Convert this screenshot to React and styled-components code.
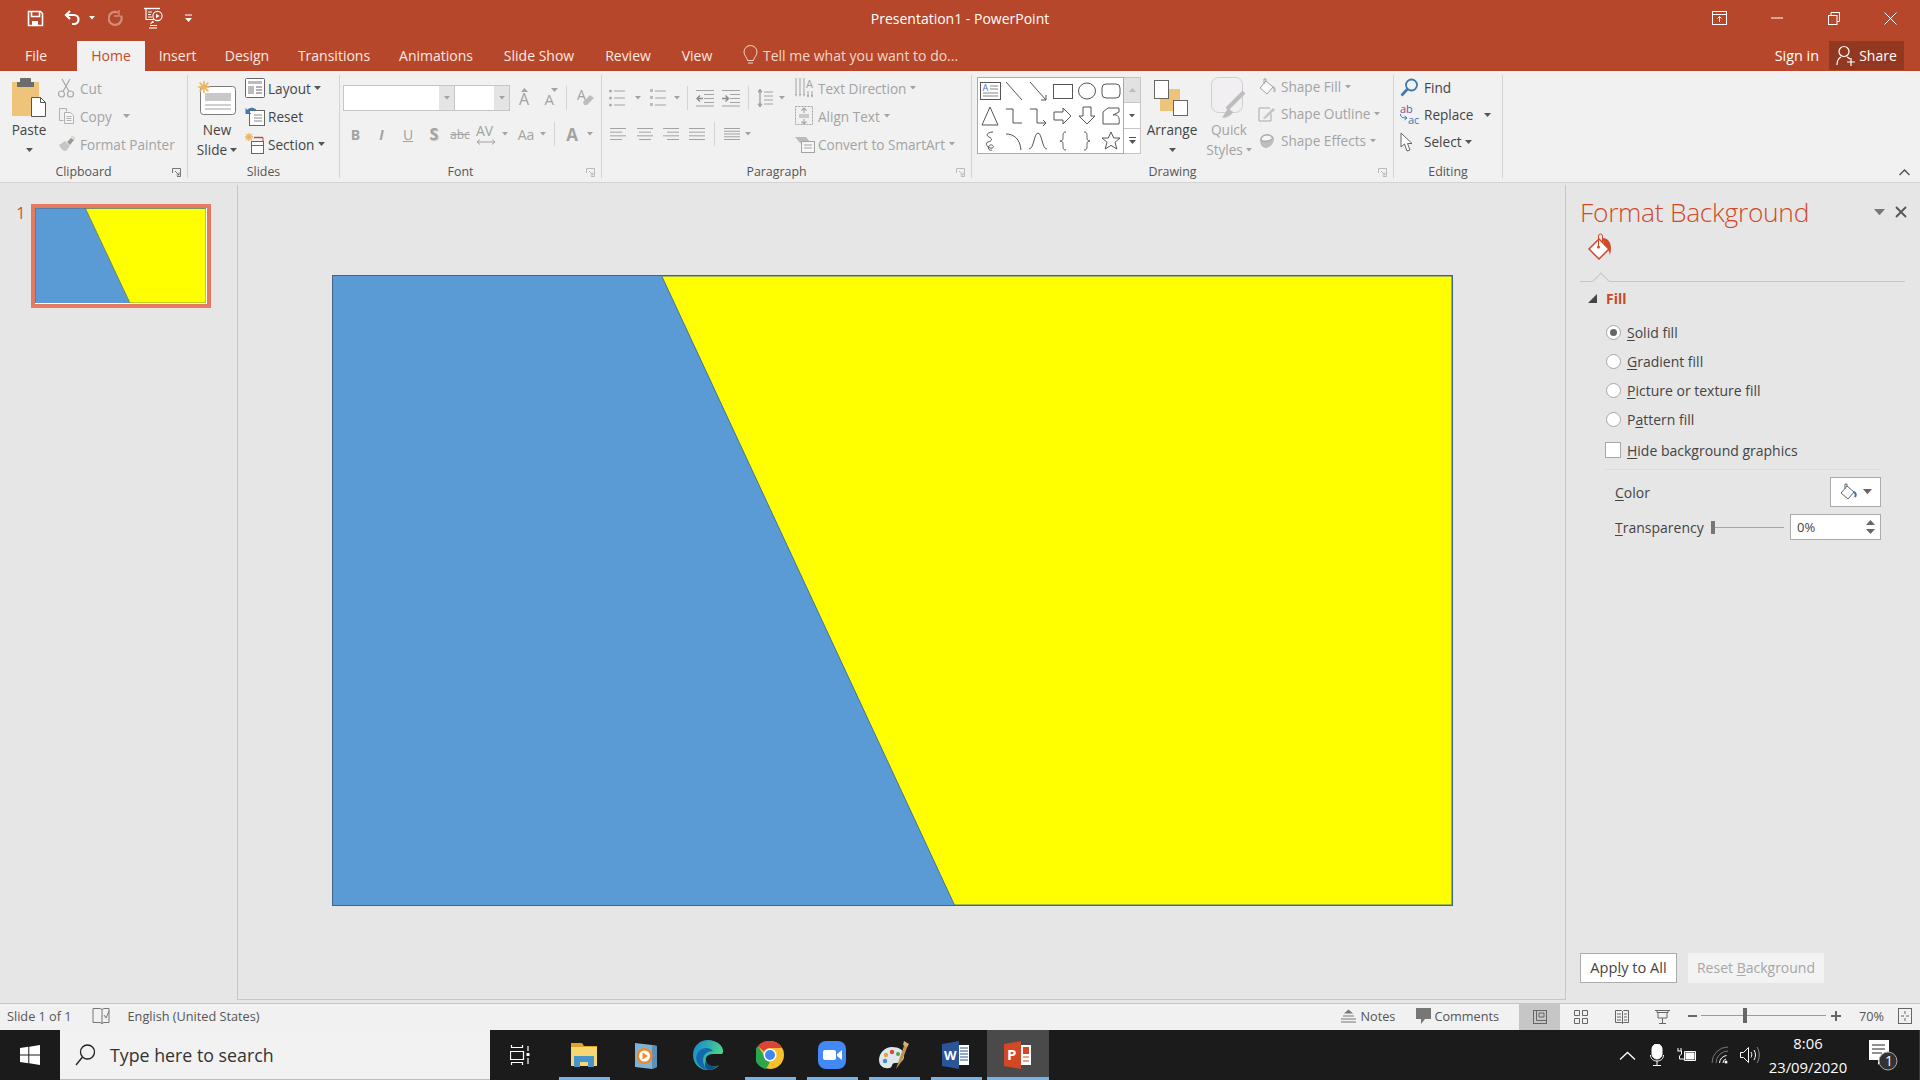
import React from 'react';
import styled, { createGlobalStyle } from 'styled-components';

const FONT = '"Open Sans", "Liberation Sans", sans-serif';
const RED = '#B7472A';
const OFF = '#a3a3a3';

const Global = createGlobalStyle`
  html, body { margin: 0; padding: 0; background: #e6e6e6; }
  body { font-family: ${FONT}; font-size: 14px; overflow: hidden; }
  * { box-sizing: border-box; }
  svg { display: block; flex: none; }
`;

const Page = styled.div`
  width: 1920px;
  height: 1080px;
  display: flex;
  flex-direction: column;
  overflow: hidden;
`;

/* title bar */
const TitleBar = styled.header`
  height: 36px;
  background: ${RED};
  color: #fff;
  display: flex;
  align-items: center;
`;
const Side = styled.div`
  flex: 1;
  display: flex;
  align-items: center;
  justify-content: ${(p) => (p.$right ? 'flex-end' : 'flex-start')};
  height: 100%;
`;
const Qat = styled.div`
  width: ${(p) => p.$w}px;
  display: flex;
  justify-content: center;
`;
const WinBtn = styled.div`
  width: 57px;
  display: flex;
  justify-content: center;
`;
const Title = styled.div`
  font-size: 14px;
`;

/* tabs */
const TabRow = styled.nav`
  height: 35px;
  background: ${RED};
  display: flex;
  align-items: flex-end;
  color: #fbe9e3;
  font-size: 14px;
`;
const Tab = styled.div`
  height: 30px;
  width: ${(p) => p.$w}px;
  padding-bottom: 2px;
  padding-right: ${(p) => p.$pr || 0}px;
  display: flex;
  align-items: center;
  justify-content: center;
  background: ${(p) => (p.$on ? '#f1f1f1' : 'transparent')};
  color: ${(p) => (p.$on ? '#c5492a' : 'inherit')};
`;
const TellMe = styled.div`
  height: 30px;
  padding-bottom: 2px;
  margin-left: 15px;
  display: flex;
  align-items: center;
  gap: 5px;
  color: #f3d6cc;
`;
const SignIn = styled.div`
  margin-left: auto;
  height: 30px;
  padding-bottom: 2px;
  display: flex;
  align-items: center;
  color: #fff;
  font-size: 14.4px;
`;
const Share = styled.div`
  width: 75px;
  height: 29px;
  margin: 0 16px 1px 10px;
  background: #923820;
  color: #fff;
  display: flex;
  align-items: center;
  justify-content: center;
  gap: 3px;
`;

/* ribbon */
const Ribbon = styled.section`
  height: 112px;
  background: #f1f1f1;
  border-bottom: 1px solid #d2d2d2;
  padding-top: 4px;
  display: flex;
  align-items: flex-start;
  position: relative;
  font-size: 13.6px;
  color: #444;
`;
const Group = styled.div`
  width: ${(p) => p.$w}px;
  height: 103px;
  border-right: 1px solid #d4d4d4;
  display: flex;
  flex-direction: column;
  position: relative;
`;
const GroupBody = styled.div`
  height: 90px;
  display: flex;
  align-items: flex-start;
  padding: ${(p) => p.$pad || '0'};
`;
const GroupLabel = styled.div`
  height: 13px;
  margin-top: 1px;
  line-height: 13px;
  text-align: center;
  font-size: 12.4px;
  color: #555;
  padding-right: ${(p) => (p.$launcher ? 20 : 0)}px;
`;
const Launcher = styled.svg`
  position: absolute;
  right: 6px;
  bottom: 1px;
`;
const Big = styled.div`
  width: ${(p) => p.$w || 50}px;
  margin-left: ${(p) => p.$ml || 0}px;
  margin-top: ${(p) => p.$mt || 0}px;
  flex: none;
  display: flex;
  flex-direction: column;
  align-items: center;
  color: ${(p) => (p.$off ? OFF : 'inherit')};
`;
const BigIcon = styled.div`
  height: 45px;
  display: flex;
  align-items: center;
  justify-content: center;
`;
const BigLine = styled.div`
  height: 20px;
  line-height: 20px;
  display: flex;
  align-items: center;
  justify-content: center;
  gap: 3px;
  white-space: nowrap;
`;
const Stack = styled.div`
  margin-left: ${(p) => p.$ml || 0}px;
  margin-top: ${(p) => (p.$mt === undefined ? -1 : p.$mt)}px;
  display: flex;
  flex-direction: column;
`;
const Small = styled.div`
  height: ${(p) => p.$h || 28}px;
  display: flex;
  align-items: center;
  white-space: nowrap;
  color: ${(p) => (p.$off ? OFF : 'inherit')};
`;
const SmallIcon = styled.div`
  width: ${(p) => p.$w || 22}px;
  display: flex;
  align-items: center;
`;
const Row = styled.div`
  display: flex;
  align-items: center;
  height: 26px;
  margin-top: ${(p) => p.$mt || 0}px;
`;
const Cell = styled.div`
  width: ${(p) => p.$w}px;
  margin-left: ${(p) => p.$ml || 0}px;
  flex: none;
  display: flex;
  justify-content: center;
  align-items: center;
  color: ${OFF};
  font-weight: ${(p) => (p.$b ? 700 : 400)};
  font-style: ${(p) => (p.$i ? 'italic' : 'normal')};
  text-decoration: ${(p) => (p.$u ? 'underline' : p.$s ? 'line-through' : 'none')};
  text-shadow: ${(p) => (p.$shadow ? '1px 1px 1px #c8c8c8' : 'none')};
  font-size: ${(p) => p.$fs || 14}px;
`;
const Glyph = styled.div`
  width: ${(p) => p.$w}px;
  height: ${(p) => p.$h}px;
  flex: none;
  position: relative;
`;
const GlyphText = styled.span`
  position: absolute;
  left: ${(p) => p.$x}px;
  top: ${(p) => p.$y}px;
  font-size: ${(p) => p.$fs}px;
  line-height: 1;
  color: ${(p) => p.$c || OFF};
`;
const GlyphArt = styled.svg`
  position: absolute;
  left: ${(p) => p.$x || 0}px;
  top: ${(p) => p.$y || 0}px;
`;
const VSep = styled.div`
  width: 1px;
  height: 24px;
  flex: none;
  background: #d4d4d4;
  margin-left: ${(p) => p.$ml || 0}px;
`;
const Combo = styled.div`
  width: ${(p) => p.$w}px;
  height: 26px;
  background: #fff;
  border: 1px solid #c6c6c6;
  border-left-width: ${(p) => (p.$joined ? 0 : 1)}px;
  display: flex;
  justify-content: flex-end;
`;
const ComboArrow = styled.div`
  width: 15px;
  background: #e4e4e4;
  display: flex;
  align-items: center;
  justify-content: center;
`;
const Gallery = styled.div`
  width: 147px;
  height: 77px;
  flex: none;
  background: #fff;
  border: 1px solid #ababab;
  display: grid;
  grid-template-columns: repeat(6, 1fr);
  grid-template-rows: repeat(3, 1fr);
  justify-items: center;
  align-items: center;
`;
const GalleryScroll = styled.div`
  width: 17px;
  height: 77px;
  flex: none;
  display: flex;
  flex-direction: column;
  border: 1px solid #c6c6c6;
  border-left: 0;
`;
const ScrollBtn = styled.div`
  flex: 1;
  display: flex;
  align-items: center;
  justify-content: center;
  background: ${(p) => (p.$off ? '#e2e2e2' : '#fff')};
  border-top: ${(p) => (p.$line ? '1px solid #c6c6c6' : '0')};
`;
const Collapse = styled.svg`
  position: absolute;
  right: 10px;
  bottom: 6px;
`;

/* main */
const Main = styled.main`
  flex: 1;
  display: flex;
  padding: 2px 0 3px;
  background: #e6e6e6;
  border-bottom: 1px solid #c6c6c6;
  min-height: 0;
`;
const ThumbPane = styled.aside`
  width: 238px;
  border-right: 1px solid #c6c6c6;
  display: flex;
  align-items: flex-start;
  padding: 19px 0 0 16px;
`;
const ThumbNo = styled.div`
  width: 15px;
  color: #d2563a;
  font-size: 17px;
  line-height: 18px;
`;
const ThumbFrame = styled.div`
  width: 180px;
  height: 104px;
  border: 4px solid #e47a62;
  background: #fff;
  padding: 0 1px 1px 0;
`;
const Editor = styled.div`
  flex: 1;
  border-bottom: 1px solid #c6c6c6;
  padding: 90px 0 0 94px;
`;
const SlideFrame = styled.div`
  width: 1121px;
  height: 631px;
  border: 1px solid #41658a;
`;

/* format pane */
const Pane = styled.aside`
  width: 355px;
  border-left: 1px solid #c6c6c6;
  padding: 10px 15px 17px 14px;
  display: flex;
  flex-direction: column;
`;
const PaneHead = styled.div`
  height: 34px;
  margin-right: -7px;
  display: flex;
  align-items: center;
`;
const PaneTitle = styled.h2`
  margin: 0;
  flex: 1;
  color: #d2492a;
  font-size: 26.4px;
  font-weight: 300;
  letter-spacing: -0.3px;
`;
const PaneCtl = styled.div`
  width: 22px;
  display: flex;
  justify-content: center;
`;
const PaneIcon = styled.div`
  height: 26px;
  margin: 4px 0 1px 7px;
`;
const PaneRule = styled.div`
  height: 1px;
  margin-top: 21px;
  background: #c6c6c6;
  position: relative;
  &::before {
    content: '';
    position: absolute;
    left: 15px;
    top: -6px;
    width: 11px;
    height: 11px;
    background: #e6e6e6;
    border: solid #c6c6c6;
    border-width: 1px 0 0 1px;
    transform: rotate(45deg);
  }
`;
const Section = styled.div`
  height: 18px;
  margin-top: 7px;
  display: flex;
  align-items: center;
  gap: 9px;
  padding-left: 8px;
  color: #c8482a;
  font-weight: 700;
  font-size: 14px;
`;
const Options = styled.div`
  margin: 11px 0 0 26px;
  color: #444;
  font-size: 14px;
`;
const OptionRow = styled.div`
  height: ${(p) => p.$h || 29}px;
  display: flex;
  align-items: center;
  gap: 6px;
  u { text-underline-offset: 2px; text-decoration-thickness: 1px; }
`;
const Radio = styled.span`
  width: 15px;
  height: 15px;
  border-radius: 50%;
  border: 1px solid #a6a6a6;
  background: #fff;
  display: flex;
  align-items: center;
  justify-content: center;
  &::after {
    content: '';
    width: 7px;
    height: 7px;
    border-radius: 50%;
    background: ${(p) => (p.$on ? '#666' : 'transparent')};
  }
`;
const Check = styled.span`
  width: 16px;
  height: 16px;
  margin: 0 0 0 -1px;
  border: 1px solid #a6a6a6;
  background: #fff;
`;
const ThinRule = styled.div`
  height: 1px;
  margin: 3px 25px 0 25px;
  background: #dcdcdc;
`;
const PropRow = styled.div`
  height: ${(p) => p.$h}px;
  width: 266px;
  margin: 7px 0 0 35px;
  display: flex;
  align-items: center;
  color: #444;
  font-size: 14px;
  u { text-underline-offset: 2px; text-decoration-thickness: 1px; }
`;
const ColorBtn = styled.div`
  width: 51px;
  height: 30px;
  margin-left: auto;
  background: #fff;
  border: 1px solid #ababab;
  display: flex;
  align-items: center;
  justify-content: center;
  gap: 6px;
`;
const SliderTrack = styled.div`
  width: 73px;
  height: 13px;
  margin-left: auto;
  display: flex;
  align-items: center;
  &::before {
    content: '';
    width: 4px;
    height: 13px;
    background: #777;
  }
  &::after {
    content: '';
    flex: 1;
    height: 1px;
    background: #a6a6a6;
  }
`;
const Spin = styled.div`
  width: 91px;
  height: 26px;
  margin-left: 6px;
  background: #fff;
  border: 1px solid #ababab;
  padding: 0 5px 0 6px;
  display: flex;
  align-items: center;
  justify-content: space-between;
  font-size: 13px;
`;
const PaneFoot = styled.div`
  margin-top: auto;
  display: flex;
  gap: 11px;
`;
const FootBtn = styled.div`
  width: ${(p) => p.$w}px;
  height: 30px;
  padding-bottom: 2px;
  display: flex;
  align-items: center;
  justify-content: center;
  font-size: ${(p) => p.$fs || 14}px;
  background: ${(p) => (p.$off ? '#f3f3f3' : '#fff')};
  border: 1px solid ${(p) => (p.$off ? '#f3f3f3' : '#ababab')};
  color: ${(p) => (p.$off ? '#a6a6a6' : '#444')};
  u { text-underline-offset: 2px; text-decoration-thickness: 1px; }
`;

/* status bar */
const Status = styled.footer`
  height: 26px;
  padding-bottom: 3px;
  background: #f1f1f1;
  display: flex;
  align-items: center;
  font-size: 12.7px;
  color: #555;
`;
const StatusText = styled.span`
  margin-left: ${(p) => p.$ml || 0}px;
`;
const StatusRight = styled.div`
  margin-left: auto;
  height: 100%;
  display: flex;
  align-items: center;
`;
const ViewBtn = styled.div`
  width: 41px;
  height: 26px;
  align-self: flex-start;
  display: flex;
  align-items: center;
  justify-content: center;
  background: ${(p) => (p.$on ? '#c6c6c6' : 'transparent')};
`;
const Zoom = styled.div`
  width: 125px;
  height: 13px;
  margin: 0 5px 0 4px;
  position: relative;
  display: flex;
  align-items: center;
  &::before {
    content: '';
    flex: 1;
    height: 1px;
    background: #9a9a9a;
  }
`;
const ZoomThumb = styled.span`
  position: absolute;
  left: 42px;
  top: -1px;
  width: 4px;
  height: 15px;
  background: #666;
`;

/* taskbar */
const Taskbar = styled.div`
  height: 50px;
  background: #1b1b1b;
  display: flex;
  align-items: stretch;
  color: #fff;
`;
const Start = styled.div`
  width: 60px;
  display: flex;
  align-items: center;
  justify-content: center;
`;
const Search = styled.div`
  width: 430px;
  background: #f2f2f2;
  border-bottom: 1px solid #bdbdbd;
  color: #333;
  display: flex;
  align-items: center;
  padding-left: 15px;
  gap: 15px;
  font-size: 17.8px;
`;
const Slot = styled.div`
  width: ${(p) => p.$w || 62}px;
  padding-right: ${(p) => p.$pr || 0}px;
  flex: none;
  display: flex;
  align-items: center;
  justify-content: center;
  position: relative;
  background: ${(p) => (p.$active ? '#4a4a4a' : 'transparent')};
  &::after {
    content: '';
    display: ${(p) => (p.$open ? 'block' : 'none')};
    position: absolute;
    left: ${(p) => (p.$active ? 0 : 6)}px;
    right: ${(p) => (p.$active ? 0 : 5)}px;
    bottom: 0;
    height: 3px;
    background: #76b4e8;
  }
`;
const Tray = styled.div`
  margin-left: auto;
  display: flex;
  align-items: center;
`;
const TrayItem = styled.div`
  width: ${(p) => p.$w || 30}px;
  display: flex;
  justify-content: center;
`;
const Clock = styled.div`
  width: 92px;
  text-align: center;
  font-size: 14.8px;
  line-height: 24px;
`;
const NotifyWrap = styled.div`
  width: 66px;
  padding-left: 15px;
  display: flex;
  border-right: 1px solid #3a3a3a;
  align-self: stretch;
  align-items: center;
`;

const Svg = ({ w = 16, h, vb, children, ...rest }) => (
  <svg width={w} height={h || w} viewBox={vb || `0 0 ${w} ${h || w}`} fill="none" {...rest}>
    {children}
  </svg>
);

const Arrow = ({ c = OFF, w = 7 }) => (
  <Svg w={w} h={(w * 4) / 7} vb="0 0 7 4">
    <path d="M0 0h7L3.500 4z" fill={c} />
  </Svg>
);

const LauncherIcon = ({ c = '#888' }) => (
  <Launcher width="9" height="9" viewBox="0 0 9 9" fill="none" stroke={c}>
    <path d="M.5 5V.5H8.500V8.500H5" />
    <path d="M3 3l4 4M7 4.500V7H4.500" />
  </Launcher>
);

const SlideArt = ({ w, h, edge, top }) => (
  <svg width={w} height={h} viewBox="0 0 1120 631" preserveAspectRatio="none">
    <rect width="1120" height="631" fill="#5B9BD5" />
    <polygon points="329,0 1120,0 1120,631 622,631" fill="#FFFF00" stroke={edge} strokeWidth={top ? 5 : 1} />
    {top && <path d="M0 2H1120M2 0V631" stroke="#4d6d8d" strokeWidth="5" />}
  </svg>
);

/* little line icons */
const Lines = ({ n = 3, w = 16, c = OFF, align = 'left', short = 0 }) => (
  <Svg w={w} h={16} stroke={c} strokeWidth="1">
    {Array.from({ length: n }).map((_, i) => {
      const len = i % 2 ? w - short : w;
      const x = align === 'center' ? (w - len) / 2 : align === 'right' ? w - len : 0;
      return <path key={i} d={`M${x} ${2.5 + (i * 11) / (n - 1)}h${len}`} />;
    })}
  </Svg>
);

const SaveIcon = () => (
  <Svg w={17} stroke="#fff" strokeWidth="1.6">
    <path d="M1.500 1.500h12l2 2v12h-14z" />
    <path d="M4.500 1.500v5h8v-5" />
    <rect x="5" y="11" width="6" height="4.500" fill="#fff" stroke="none" />
  </Svg>
);
const UndoIcon = () => (
  <Svg w={18} stroke="#fff" strokeWidth="2.2">
    <path d="M6 2L2 6l4 4" />
    <path d="M2 6h8a4.500 4.500 0 0 1 0 9H8" />
  </Svg>
);
const RedoIcon = () => (
  <Svg w={16} h={18} stroke="#d28e7a" strokeWidth="2.200">
    <path d="M10 3.500a6.500 6.500 0 1 0 3 3" />
    <path d="M11 1v6H6" strokeWidth="1.400" />
  </Svg>
);
const PresentIcon = () => (
  <Svg w={21} h={22} stroke="#fff" strokeWidth="1.1">
    <path d="M1 1.500h16" strokeWidth="1.4" />
    <path d="M3 1.500v11h9" />
    <path d="M5 5h4M5 7.500h3M5 10h4" />
    <circle cx="14.500" cy="9" r="4.600" />
    <path d="M13 6.800l3.600 2.200-3.600 2.200z" fill="#fff" stroke="none" />
    <path d="M10 14l-2.500 3M7 18.500h7M10 14v2" />
    <path d="M6 21h8" />
  </Svg>
);

const PasteIcon = () => (
  <Svg w={34} h={41} vb="0 0 34 41">
    <rect x="0" y="5" width="27" height="34" fill="#eec47b" />
    <rect x="8" y="1" width="11" height="8" rx="1" fill="#6d6d6d" />
    <rect x="5" y="5" width="17" height="5" fill="#6d6d6d" />
    <path d="M19.500 20.500h9l5 5v14h-14z" fill="#fff" stroke="#555" />
    <path d="M28.500 20.500v5h5" stroke="#555" />
  </Svg>
);
const CutIcon = () => (
  <Svg w={16} h={20} stroke="#a8a8a8" strokeWidth="1.2">
    <circle cx="3.500" cy="16" r="3" />
    <circle cx="12.500" cy="16" r="3" />
    <path d="M5 13.500L12 1M11 13.500L4 1" />
  </Svg>
);
const CopyIcon = () => (
  <Svg w={18} h={18} stroke="#b0b0b0">
    <path d="M1.500 1.500h7v3M1.500 1.500v12h4" />
    <path d="M6.500 5.500h6l3 3v8h-9z" fill="#f6f6f6" />
    <path d="M8.500 9.500h5M8.500 11.500h5M8.500 13.500h5" />
  </Svg>
);
const PainterIcon = () => (
  <Svg w={18} h={16}>
    <path d="M1 9l6-4 5 5-4 5C5 15 3 13 1 9z" fill="#c6c6c6" />
    <path d="M9 6l4-4 3 2-4 5z" fill="#9a9a9a" />
    <path d="M13 1h3v3" stroke="#e5c46f" />
  </Svg>
);
const NewSlideIcon = () => (
  <Svg w={40} h={36}>
    <rect x="3.500" y="6.500" width="35" height="28" rx="3" fill="#fff" stroke="#7a7a7a" />
    <rect x="8" y="13" width="26" height="8" fill="#c8c8c8" />
    <path d="M8 25h26M8 29h26" stroke="#a0a0a0" />
    <g stroke="#eeb55a" strokeWidth="1.6">
      <path d="M7 1v12M1 7h12M2.600 2.600l8.800 8.800M11.400 2.600l-8.800 8.800" />
    </g>
  </Svg>
);
const LayoutIcon = () => (
  <Svg w={20} h={20} stroke="#666">
    <rect x=".5" y=".5" width="19" height="19" rx="1" fill="#fff" />
    <rect x="3" y="3" width="14" height="3" fill="#bbb" stroke="none" />
    <rect x="3" y="8" width="6" height="8" fill="#bbb" stroke="none" />
    <path d="M11 9h6M11 12h6M11 15h6" />
  </Svg>
);
const ResetIcon = () => (
  <Svg w={20} h={20}>
    <rect x="4.500" y="4.500" width="15" height="15" fill="#fff" stroke="#666" />
    <path d="M9 9h8M9 12h8M9 15h8" stroke="#888" />
    <path d="M2 6.500a5 5 0 0 1 8.500-2" stroke="#3d7ab5" strokeWidth="2.200" />
    <path d="M.5 2v6h6z" fill="#3d7ab5" />
  </Svg>
);
const SectionIcon = () => (
  <Svg w={20} h={22}>
    <rect x="6.500" y="8.500" width="12" height="12" fill="#fff" stroke="#666" />
    <path d="M6.500 12.500h12" stroke="#666" />
    <path d="M9 4.500h9" stroke="#c5492a" strokeWidth="1.400" />
    <path d="M18 4.500v4" stroke="#c5492a" />
    <g stroke="#eeb55a" strokeWidth="1.300">
      <path d="M4 0v8M0 4h8M1 1l6 6M7 1L1 7" />
    </g>
  </Svg>
);
const GrowIcon = ({ up }) => (
  <Glyph $w={16} $h={20}>
    <GlyphText $x={2} $y={up ? 3 : 4} $fs={up ? 16 : 15}>A</GlyphText>
    <GlyphArt $x={up ? 4 : 8} width="7" height="4" viewBox="0 0 7 4">
      <path d={up ? 'M3.500 0L7 4H0z' : 'M0 0h7L3.500 4z'} fill={OFF} />
    </GlyphArt>
  </Glyph>
);
const ClearIcon = () => (
  <Glyph $w={18} $h={20}>
    <GlyphText $x={0} $y={0} $fs={14}>A</GlyphText>
    <GlyphArt $x={5} $y={6} width="13" height="12" viewBox="0 0 13 12">
      <path d="M1 8l7-7 4 3-7 7H2z" fill="#bdbdbd" />
    </GlyphArt>
  </Glyph>
);
const KernIcon = () => (
  <Glyph $w={22} $h={22}>
    <GlyphText $x={1} $y={1} $fs={14}>AV</GlyphText>
    <GlyphArt $x={1} $y={16} width="20" height="6" viewBox="0 0 20 6" fill="none" stroke={OFF}>
      <path d="M1 3h18M4 .5L1 3l3 2.500M16 .5L19 3l-3 2.500" />
    </GlyphArt>
  </Glyph>
);
const Bullets = ({ num }) => (
  <Svg w={16} h={20}>
    {[3, 10, 17].map((y) => (
      <g key={y}>
        {num ? <path d={`M0 ${y - 2}h3v3H0z`} fill="#bbb" /> : <circle cx="1.500" cy={y} r="1.500" fill="#aaa" />}
        <path d={`M5 ${y}h11`} stroke={OFF} />
      </g>
    ))}
  </Svg>
);
const Indent = ({ inc }) => (
  <Svg w={18} h={18} stroke={OFF}>
    <path d="M0 1.500h18M8 5.500h10M8 9.500h10M8 13.500h10M0 17h18" />
    <path d={inc ? 'M0 9.500h6M3.500 6.500l3 3-3 3' : 'M1 9.500h6M4 6.500l-3 3 3 3'} stroke="#8a8a8a" strokeWidth="1.400" />
  </Svg>
);
const SpacingIcon = () => (
  <Svg w={16} h={20} stroke={OFF}>
    <path d="M3 1v18" strokeWidth="1.400" />
    <path d="M1 4l2-3 2 3zM1 16l2 3 2-3z" fill={OFF} />
    <path d="M7 4h9M7 8h9M7 12h9M7 16h9" />
  </Svg>
);
const TextDirIcon = () => (
  <Glyph $w={18} $h={22}>
    <GlyphArt width="18" height="22" viewBox="0 0 18 22" fill="none">
      <path d="M1 1v16M5 1v16M9 1v16M13 20v-6M17 20v-6" stroke={OFF} />
      <path d="M1 20l-1-3h2zM5 20l-1-3h2zM9 20l-1-3h2zM13 21l-1-3h2zM17 21l-1-3h2z" fill={OFF} />
    </GlyphArt>
    <GlyphText $x={11} $y={1} $fs={11}>A</GlyphText>
  </Glyph>
);
const AlignTextIcon = () => (
  <Svg w={18} h={20} stroke={OFF}>
    <path d="M.5.5h17v18H.5z" strokeDasharray="2 1" />
    <path d="M9 2v5M9 18v-5M6.500 4.500L9 2l2.500 2.500M6.500 15.500L9 18l2.500-2.500" strokeWidth="1.100" />
    <path d="M4 9h10M4 11h10" />
  </Svg>
);
const SmartArtIcon = () => (
  <Svg w={20} h={18}>
    <path d="M0 2h11l5 6H5z" fill="#bbb" />
    <rect x="6.500" y="6.500" width="13" height="11" fill="#f6f6f6" stroke={OFF} />
    <path d="M9 10h8M9 13h8" stroke={OFF} />
  </Svg>
);
const ArrangeIcon = () => (
  <Svg w={36} h={36}>
    <rect x="14" y="9" width="12" height="21" fill="#eec47b" />
    <rect x="6" y="17" width="15" height="14" fill="#eec47b" />
    <rect x=".5" y=".5" width="14" height="18" fill="#fff" stroke="#666" />
    <rect x="19.500" y="20.500" width="14" height="15" fill="#fff" stroke="#666" />
  </Svg>
);
const QuickIcon = () => (
  <Svg w={36} h={42}>
    <rect x=".5" y=".5" width="31" height="35" rx="7" fill="#f1eff1" stroke="#cfcfcf" />
    <path d="M33 15L16 32" stroke="#bdbdbd" strokeWidth="4" />
    <path d="M17 31l-6 10c4 0 10-3 11-6z" fill="#bdbdbd" />
  </Svg>
);
const ShapeFillIcon = ({ c = '#a0a0a0', accent = '#b9b9b9' }) => (
  <Svg w={18} h={18} stroke={c}>
    <path d="M8 3l7 6-6 7-7-6z" fill="#fafafa" />
    <path d="M8 3V1h-2v5" />
    <path d="M15 9c2 1 2 3 1 5" stroke={accent} strokeWidth="2" />
  </Svg>
);
const ShapeOutlineIcon = () => (
  <Svg w={18} h={18} stroke="#a8a8a8">
    <path d="M1 3h11M1 3v13h12V9" />
    <path d="M5 13l10-10 2 2L7 14z" fill="#c4c4c4" stroke="none" />
  </Svg>
);
const ShapeFxIcon = () => (
  <Svg w={18} h={16}>
    <path d="M2 7c0-4 4-6 7-6s7 2 7 5c0 4-4 9-8 9-4 0-6-4-6-8z" fill="#bdbdbd" />
    <path d="M3 7c0-3 3-5 6-5s6 2 5 4c-2 2-9 3-11 1z" fill="#f4f4f4" stroke="#a0a0a0" />
  </Svg>
);
const FindIcon = () => (
  <Svg w={19} h={19} stroke="#3f78ad">
    <circle cx="11.500" cy="7" r="5.500" strokeWidth="1.800" />
    <path d="M7.500 11L1.500 17.500" strokeWidth="2.600" />
  </Svg>
);
const ReplaceIcon = () => (
  <Glyph $w={21} $h={21}>
    <GlyphText $x={0} $y={-1} $fs={11} $c="#7a4da0">ab</GlyphText>
    <GlyphText $x={8} $y={10} $fs={11} $c="#3f78ad">ac</GlyphText>
    <GlyphArt $y={10} width="8" height="8" viewBox="0 0 8 8" fill="none" stroke="#3f78ad">
      <path d="M.5 0c0 3 2 4 6 4M4.500 2l2.500 2-2.500 2" />
    </GlyphArt>
  </Glyph>
);
const SelectIcon = () => (
  <Svg w={13} h={20}>
    <path d="M1 1v14l3.500-3 2.500 7 3-1-2.500-6.500H12z" fill="#fff" stroke="#666" />
  </Svg>
);

const S = ({ children }) => (
  <Svg w={20} h={20} stroke="#555">
    {children}
  </Svg>
);
const SHAPES = [
  <Glyph key="tb" $w={21} $h={20}>
    <GlyphArt width="21" height="20" viewBox="0 0 21 20" fill="none" stroke="#555">
      <rect x=".5" y="1.500" width="20" height="17" fill="#fff" />
      <path d="M10 5h8M10 8h8M3 12h15M3 15h15" stroke="#888" />
    </GlyphArt>
    <GlyphText $x={3} $y={2} $fs={9} $c="#3f78ad">A</GlyphText>
  </Glyph>,
  <S key="l"><path d="M2 1l16 18" /></S>,
  <S key="al"><path d="M2 1l16 18M18 14v5h-5" /></S>,
  <S key="r"><rect x=".5" y="3.500" width="19" height="14" /></S>,
  <S key="e"><ellipse cx="10" cy="10" rx="8.500" ry="8" /></S>,
  <S key="rr"><rect x="1" y="3" width="18" height="14" rx="4" /></S>,
  <S key="t"><path d="M10 1l8 18H2z" /></S>,
  <S key="ec"><path d="M2 3h7v14h9" /></S>,
  <S key="ea"><path d="M2 3h7v14h9M15 14l3 3-3 3" /></S>,
  <S key="ra"><path d="M1 6h9V2l8 8-8 8v-4H1z" /></S>,
  <S key="da"><path d="M6 1h8v9h4l-8 8-8-8h4z" /></S>,
  <S key="f"><path d="M2 18V6l5-4h11v4l-6 3c5-1 7 2 6 9z" /></S>,
  <S key="sc"><path d="M13 1c-5 0-8 3-4 5s3 4-1 5 0 7 4 6-1-5-3-2 1 5 3 4" /></S>,
  <S key="ar"><path d="M2 3c8 0 14 5 15 16" /></S>,
  <S key="w"><path d="M1 18C6 18 6 2 10 2s4 16 9 16" /></S>,
  <S key="lb"><path d="M13 1c-3 0-3 2-3 4.500S10 10 7 10c3 0 3 2 3 4.500S10 19 13 19" /></S>,
  <S key="rb"><path d="M7 1c3 0 3 2 3 4.500S10 10 13 10c-3 0-3 2-3 4.500S10 19 7 19" /></S>,
  <S key="st"><path d="M10 1l2.700 6h6.300l-5 4.300 1.800 6.700-5.800-3.600L4.200 18 6 11.300 1 7h6.300z" /></S>,
];

const TipBucket = () => (
  <Svg w={27} h={27} vb="0 0 27 27">
    <path d="M12 6l10 10-10 10L2 16z" fill="#fff" stroke="#d2492a" strokeWidth="1.500" />
    <path d="M11.500 14V3a2 2 0 0 1 4 0v6" stroke="#d2492a" />
    <circle cx="11.500" cy="14" r="1.500" fill="#d2492a" />
    <path d="M15 5c7 0 11 6 8 17-1-4-2-7-5-9z" fill="#d2492a" />
  </Svg>
);

const WinLogo = () => (
  <Svg w={20} h={20} vb="0 0 20 20">
    <path d="M0 3l8.300-1.200v7.700H0zM9.300 1.700L20 0v9.500H9.300zM0 10.500h8.300v7.700L0 17zM9.300 10.500H20V20L9.300 18.300z" fill="#fff" />
  </Svg>
);
const SearchIcon = () => (
  <Svg w={20} h={22} stroke="#222" strokeWidth="1.300">
    <circle cx="12.500" cy="8" r="7" />
    <path d="M7.500 13L1 21" />
  </Svg>
);
const TaskView = () => (
  <Svg w={20} h={20} stroke="#fff" strokeWidth="1.200">
    <path d="M1.500 0v2.500h11V0M.5 6.500h13v8H.5zM1.500 20v-2.500h11V20M18 1v5M18 13v6" />
    <rect x="16.500" y="8" width="3" height="3" fill="#fff" stroke="none" />
  </Svg>
);
const Explorer = () => (
  <Svg w={28} h={26}>
    <path d="M1 1h11l2 3h13v20H1z" fill="#dca52a" />
    <rect x="1" y="5" width="26" height="19" fill="#f7d774" />
    <path d="M4 25V14h20v11h-6v-5h-8v5z" fill="#4a94cc" />
  </Svg>
);
const Media = () => (
  <Svg w={24} h={28}>
    <path d="M1 2l17 2 5 1v21l-5 2-17-2z" fill="#7fb2d4" />
    <path d="M18 4l5 1v21l-5 2z" fill="#5b91b8" />
    <circle cx="10.500" cy="15" r="8" fill="#ee8a2c" />
    <circle cx="10.500" cy="15" r="5.500" fill="#fff" />
    <path d="M8.500 11.500l5.500 3.500-5.500 3.500z" fill="#ee8a2c" />
  </Svg>
);
const Edge = () => (
  <Svg w={30} h={30}>
    <defs>
      <linearGradient id="edgeTop" x1="0" y1="0" x2="1" y2="0.500">
        <stop offset="0" stopColor="#1581d6" />
        <stop offset="1" stopColor="#4fdc7f" />
      </linearGradient>
    </defs>
    <path d="M15 0C7 0 0 6 0 15c0 8 6 15 14 15 5 0 9-1 12-5-5 3-12 1-13-4-1-4 2-7 7-7h9c1-1 1-2 1-3C30 5 23 0 15 0z" fill="url(#edgeTop)" />
    <path d="M10 20c0-6 5-9 10-9-2-3-7-4-11-2-5 2-7 8-5 13 2 5 7 8 11 8-3-2-5-6-5-10z" fill="#1269b0" />
    <path d="M13 21c1 5 8 7 13 4-3 3-7 5-11 5-3-2-4-6-2-9z" fill="#0d4f8a" />
  </Svg>
);
const Chrome = () => (
  <Svg w={28} h={28}>
    <circle cx="14" cy="14" r="14" fill="#fbc02d" />
    <path d="M14 0a14 14 0 0 1 12.100 7H14a7 7 0 0 0-6.100 3.500L1.800 5A14 14 0 0 1 14 0z" fill="#dd4437" />
    <path d="M1.800 5l6.100 9a7 7 0 0 0 6.100 7l-4 6.900A14 14 0 0 1 1.800 5z" fill="#2da44e" />
    <circle cx="14" cy="14" r="6.500" fill="#fff" />
    <circle cx="14" cy="14" r="5" fill="#4285f4" />
  </Svg>
);
const ZoomApp = () => (
  <Svg w={28} h={28}>
    <rect width="28" height="28" rx="8" fill="#4289f5" />
    <rect x="5" y="9" width="13" height="10" rx="2" fill="#fff" />
    <path d="M19 13l5-4v10l-5-4z" fill="#fff" />
  </Svg>
);
const Palette = () => (
  <Svg w={30} h={30}>
    <path d="M13 7C6 7 0 13 0 20c0 6 5 9 10 8 4 0 2-5 6-5s9-1 9-7-5-9-12-9z" fill="#dfe7ee" />
    <circle cx="7" cy="15" r="2.200" fill="#e5a23a" />
    <circle cx="13" cy="12" r="2.200" fill="#d9483b" />
    <circle cx="6" cy="21" r="2.200" fill="#3f8ec9" />
    <circle cx="19" cy="14" r="2" fill="#4aa64a" />
    <path d="M26 3l-6 17-3 9 6-8 6-16z" fill="#c09350" />
    <path d="M25 1l5 3-2 3-4-2z" fill="#d8b170" />
  </Svg>
);
const WordApp = () => (
  <Svg w={28} h={28}>
    <path d="M0 3l17-3v28L0 25z" fill="#2a5699" />
    <path d="M17 4h10v20H17z" fill="#fff" />
    <path d="M18 7h8M18 10h8M18 13h8M18 16h8M18 19h8" stroke="#2a5699" />
    <text x="2" y="19" fontSize="13" fontWeight="700" fill="#fff" fontFamily={FONT}>W</text>
  </Svg>
);
const PptApp = () => (
  <Svg w={28} h={28}>
    <path d="M0 3l17-3v28L0 25z" fill="#d24726" />
    <path d="M17 4h10v20H17z" fill="#fff" />
    <path d="M19 6h6v7h-6z" fill="#d24726" />
    <path d="M19 16h6M19 20h6" stroke="#d24726" />
    <text x="3" y="19" fontSize="15" fontWeight="700" fill="#fff" fontFamily={FONT}>P</text>
  </Svg>
);

const TABS = [
  ['Insert', 65], ['Design', 74], ['Transitions', 100], ['Animations', 104], ['Slide Show', 102], ['Review', 76], ['View', 62],
];

export default function App() {
  return (
    <Page>
      <Global />
      <TitleBar>
        <Side>
          <Qat $w={18} />
          <Qat $w={34}><SaveIcon /></Qat>
          <Qat $w={6} />
          <Qat $w={30}><UndoIcon /></Qat>
          <Qat $w={8}><Arrow c="#fff" w={6} /></Qat>
          <Qat $w={4} />
          <Qat $w={32}><RedoIcon /></Qat>
          <Qat $w={42}><PresentIcon /></Qat>
          <Qat $w={28}><Svg w={7} h={8} stroke="#fff"><path d="M0 1h7" /><path d="M0 4h7L3.500 8z" fill="#fff" stroke="none" /></Svg></Qat>
        </Side>
        <Title>Presentation1 - PowerPoint</Title>
        <Side $right>
          <WinBtn><Svg w={15} h={14} stroke="#fff"><rect x=".5" y=".5" width="14" height="13" /><path d="M.5 3.500h14M7.500 11V5.500M5.500 7.500l2-2 2 2" /></Svg></WinBtn>
          <WinBtn><Svg w={12} h={2} stroke="#fff"><path d="M0 1h12" /></Svg></WinBtn>
          <WinBtn><Svg w={12} h={13} stroke="#fff"><rect x=".5" y="3.500" width="8.500" height="9" /><path d="M3 3.500V.5h8.500v9H9" /></Svg></WinBtn>
          <WinBtn><Svg w={13} stroke="#fff"><path d="M.5.5l12 12M12.500.5l-12 12" /></Svg></WinBtn>
          <Qat $w={1} />
        </Side>
      </TitleBar>

      <TabRow>
        <Tab $w={77} $pr={5}>File</Tab>
        <Tab $w={68} $on>Home</Tab>
        {TABS.map(([t, w]) => <Tab key={t} $w={w}>{t}</Tab>)}
        <TellMe>
          <Svg w={15} h={20} stroke="#f3d6cc"><path d="M4.500 15.500C4 12 1 11 1 7a6.500 6.500 0 0 1 13 0c0 4-3 5-3.500 8.500zM5 18h5" /></Svg>
          Tell me what you want to do...
        </TellMe>
        <SignIn>Sign in</SignIn>
        <Share>
          <Svg w={20} h={21} stroke="#fff" strokeWidth="1.200"><circle cx="8" cy="6.500" r="5" /><path d="M1 20c0-5 2-7 4-8M11 12c1 .5 2 1 3 2M11 17h8M15 13v8" /></Svg>
          Share
        </Share>
      </TabRow>

      <Ribbon>
        <Group $w={188}>
          <GroupBody $pad="0 0 0 8px">
            <Big $w={42}>
              <BigIcon><PasteIcon /></BigIcon>
              <BigLine>Paste</BigLine>
              <BigLine><Arrow c="#555" /></BigLine>
            </Big>
            <Stack $ml={8}>
              <Small $off><SmallIcon><CutIcon /></SmallIcon>Cut</Small>
              <Small $off><SmallIcon><CopyIcon /></SmallIcon>Copy<Cell $w={30}><Arrow /></Cell></Small>
              <Small $off><SmallIcon><PainterIcon /></SmallIcon>Format Painter</Small>
            </Stack>
          </GroupBody>
          <GroupLabel $launcher>Clipboard</GroupLabel>
          <LauncherIcon c="#777" />
        </Group>

        <Group $w={152}>
          <GroupBody $pad="0 0 0 4px">
            <Big>
              <BigIcon><NewSlideIcon /></BigIcon>
              <BigLine>New</BigLine>
              <BigLine>Slide <Arrow c="#555" /></BigLine>
            </Big>
            <Stack $ml={3}>
              <Small><SmallIcon $w={23}><LayoutIcon /></SmallIcon>Layout<Cell $w={14}><Arrow c="#555" /></Cell></Small>
              <Small><SmallIcon $w={23}><ResetIcon /></SmallIcon>Reset</Small>
              <Small><SmallIcon $w={23}><SectionIcon /></SmallIcon>Section<Cell $w={14}><Arrow c="#555" /></Cell></Small>
            </Stack>
          </GroupBody>
          <GroupLabel>Slides</GroupLabel>
        </Group>

        <Group $w={262}>
          <GroupBody $pad="0 0 0 3px">
            <Stack $mt={0}>
              <Row $mt={10}>
                <Combo $w={112}><ComboArrow><Arrow w={6} /></ComboArrow></Combo>
                <Combo $w={55} $joined><ComboArrow><Arrow w={6} /></ComboArrow></Combo>
                <Cell $w={26} $ml={2}><GrowIcon up /></Cell>
                <Cell $w={25}><GrowIcon /></Cell>
                <VSep $ml={3} />
                <Cell $w={20} $ml={9}><ClearIcon /></Cell>
              </Row>
              <Row $mt={10}>
                <Cell $w={25} $b>B</Cell>
                <Cell $w={27} $i $b>I</Cell>
                <Cell $w={26} $u>U</Cell>
                <Cell $w={26} $b $shadow $fs={16}>S</Cell>
                <Cell $w={26} $s $fs={12}>abc</Cell>
                <Cell $w={26}><KernIcon /></Cell>
                <Cell $w={12}><Arrow w={6} /></Cell>
                <Cell $w={24} $ml={3}>Aa</Cell>
                <Cell $w={10}><Arrow w={6} /></Cell>
                <VSep $ml={6} />
                <Cell $w={26} $ml={4} $b $fs={17}>A</Cell>
                <Cell $w={10}><Arrow w={6} /></Cell>
              </Row>
            </Stack>
          </GroupBody>
          <GroupLabel $launcher>Font</GroupLabel>
          <LauncherIcon c="#bbb" />
        </Group>

        <Group $w={370}>
          <GroupBody $pad="0 0 0 4px">
            <Stack $mt={0}>
              <Row $mt={10}>
                <Cell $w={22}><Bullets /></Cell>
                <Cell $w={20}><Arrow w={6} /></Cell>
                <Cell $w={19}><Bullets num /></Cell>
                <Cell $w={20}><Arrow w={6} /></Cell>
                <VSep />
                <Cell $w={34}><Indent /></Cell>
                <Cell $w={18}><Indent inc /></Cell>
                <VSep $ml={8} />
                <Cell $w={24} $ml={4}><SpacingIcon /></Cell>
                <Cell $w={10}><Arrow w={6} /></Cell>
              </Row>
              <Row $mt={10}>
                <Cell $w={24}><Lines n={4} short={4} /></Cell>
                <Cell $w={30}><Lines n={4} short={4} align="center" /></Cell>
                <Cell $w={22}><Lines n={4} short={4} align="right" /></Cell>
                <Cell $w={30}><Lines n={4} /></Cell>
                <VSep $ml={2} />
                <Cell $w={24} $ml={5}><Lines n={5} /></Cell>
                <Cell $w={8}><Arrow w={6} /></Cell>
              </Row>
            </Stack>
            <Stack $ml={8}>
              <Small $off><SmallIcon $w={23}><TextDirIcon /></SmallIcon>Text Direction<Cell $w={14}><Arrow w={6} /></Cell></Small>
              <Small $off><SmallIcon $w={23}><AlignTextIcon /></SmallIcon>Align Text<Cell $w={14}><Arrow w={6} /></Cell></Small>
              <Small $off><SmallIcon $w={23}><SmartArtIcon /></SmallIcon>Convert to SmartArt<Cell $w={14}><Arrow w={6} /></Cell></Small>
            </Stack>
          </GroupBody>
          <GroupLabel $launcher>Paragraph</GroupLabel>
          <LauncherIcon c="#bbb" />
        </Group>

        <Group $w={422}>
          <GroupBody $pad="2px 0 0 5px">
            <Gallery>{SHAPES}</Gallery>
            <GalleryScroll>
              <ScrollBtn $off><Svg w={7} h={4}><path d="M0 4h7L3.500 0z" fill="#bbb" /></Svg></ScrollBtn>
              <ScrollBtn $line><Arrow c="#555" w={6} /></ScrollBtn>
              <ScrollBtn $line><Svg w={7} h={7}><path d="M0 .5h7" stroke="#555" /><path d="M0 3h7L3.500 7z" fill="#555" /></Svg></ScrollBtn>
            </GalleryScroll>
            <Big $ml={6} $mt={-2}>
              <BigIcon><ArrangeIcon /></BigIcon>
              <BigLine>Arrange</BigLine>
              <BigLine><Arrow c="#555" /></BigLine>
            </Big>
            <Big $ml={7} $mt={-2} $off>
              <BigIcon><QuickIcon /></BigIcon>
              <BigLine>Quick</BigLine>
              <BigLine>Styles <Arrow w={6} /></BigLine>
            </Big>
            <Stack $ml={4} $mt={-4}>
              <Small $off $h={27}><SmallIcon $w={23}><ShapeFillIcon /></SmallIcon>Shape Fill<Cell $w={14}><Arrow w={6} /></Cell></Small>
              <Small $off $h={27}><SmallIcon $w={23}><ShapeOutlineIcon /></SmallIcon>Shape Outline<Cell $w={14}><Arrow w={6} /></Cell></Small>
              <Small $off $h={27}><SmallIcon $w={23}><ShapeFxIcon /></SmallIcon>Shape Effects<Cell $w={14}><Arrow w={6} /></Cell></Small>
            </Stack>
          </GroupBody>
          <GroupLabel $launcher>Drawing</GroupLabel>
          <LauncherIcon c="#bbb" />
        </Group>

        <Group $w={109}>
          <GroupBody $pad="0 0 0 6px">
            <Stack>
              <Small $h={27}><SmallIcon $w={24}><FindIcon /></SmallIcon>Find</Small>
              <Small $h={27}><SmallIcon $w={24}><ReplaceIcon /></SmallIcon>Replace<Cell $w={28}><Arrow c="#555" /></Cell></Small>
              <Small $h={27}><SmallIcon $w={24}><SelectIcon /></SmallIcon>Select<Cell $w={14}><Arrow c="#555" /></Cell></Small>
            </Stack>
          </GroupBody>
          <GroupLabel>Editing</GroupLabel>
        </Group>
        <Collapse width="11" height="7" viewBox="0 0 11 7" fill="none" stroke="#555" strokeWidth="1.500"><path d="M.5 6l5-5 5 5" /></Collapse>
      </Ribbon>

      <Main>
        <ThumbPane>
          <ThumbNo>1</ThumbNo>
          <ThumbFrame><SlideArt w={171} h={95} edge="#5f7f3a" top /></ThumbFrame>
        </ThumbPane>
        <Editor>
          <SlideFrame><SlideArt w={1119} h={629} edge="#41719C" /></SlideFrame>
        </Editor>
        <Pane>
          <PaneHead>
            <PaneTitle>Format Background</PaneTitle>
            <PaneCtl><Arrow c="#777" w={11} /></PaneCtl>
            <PaneCtl><Svg w={12} stroke="#555" strokeWidth="1.800"><path d="M1 1l10 10M11 1L1 11" /></Svg></PaneCtl>
          </PaneHead>
          <PaneIcon><TipBucket /></PaneIcon>
          <PaneRule />
          <Section>
            <Svg w={9} h={9}><path d="M9 0v9H0z" fill="#444" /></Svg>
            Fill
          </Section>
          <Options>
            <OptionRow><Radio $on /><span><u>S</u>olid fill</span></OptionRow>
            <OptionRow><Radio /><span><u>G</u>radient fill</span></OptionRow>
            <OptionRow><Radio /><span><u>P</u>icture or texture fill</span></OptionRow>
            <OptionRow><Radio /><span>P<u>a</u>ttern fill</span></OptionRow>
            <OptionRow $h={32}><Check /><span><u>H</u>ide background graphics</span></OptionRow>
          </Options>
          <ThinRule />
          <PropRow $h={30}>
            <span><u>C</u>olor</span>
            <ColorBtn>
              <ShapeFillIcon c="#666" accent="#3f78ad" />
              <Arrow c="#666" w={9} />
            </ColorBtn>
          </PropRow>
          <PropRow $h={26}>
            <span><u>T</u>ransparency</span>
            <SliderTrack />
            <Spin>
              0%
              <Svg w={9} h={16}><path d="M0 6l4.500-5L9 6zM0 10l4.500 5L9 10z" fill="#666" /></Svg>
            </Spin>
          </PropRow>
          <PaneFoot>
            <FootBtn $w={97} $fs={14.6}><span>App<u>l</u>y to All</span></FootBtn>
            <FootBtn $w={136} $off><span>Reset <u>B</u>ackground</span></FootBtn>
          </PaneFoot>
        </Pane>
      </Main>

      <Status>
        <StatusText $ml={7}>Slide 1 of 1</StatusText>
        <StatusText $ml={20}>
          <Svg w={18} h={18} stroke="#777"><path d="M1 1.500h7l2 1v14l-2-1H1zM10 2.500l2-1h5v14h-5l-2 1" /><path d="M12 8l2 3 3-7" /></Svg>
        </StatusText>
        <StatusText $ml={18}>English (United States)</StatusText>
        <StatusRight>
          <Svg w={15} h={14} stroke="#777"><path d="M2 7h11M0 10h15M0 13h15" /><path d="M3 4.500l4.500-4 4.500 4z" fill="#777" stroke="none" /></Svg>
          <StatusText $ml={5}>Notes</StatusText>
          <StatusText $ml={21}><Svg w={15} h={16}><path d="M0 0h15v11H9l-4 5v-5H0z" fill="#777" /></Svg></StatusText>
          <StatusText $ml={3}>Comments</StatusText>
          <StatusText $ml={20} />
          <ViewBtn $on><Svg w={14} h={14} stroke="#666"><rect x=".5" y=".5" width="13" height="13" /><path d="M3.500.5v10h10M6 3h5v4H6z" /></Svg></ViewBtn>
          <ViewBtn><Svg w={14} h={14} stroke="#666"><path d="M.5.5h5v5h-5zM8.500.5h5v5h-5zM.5 8.500h5v5h-5zM8.500 8.500h5v5h-5z" /></Svg></ViewBtn>
          <ViewBtn><Svg w={14} h={14} stroke="#666"><path d="M.5.5h6l1 1 0 12-1-1h-6zM7.500 1.500l1-1h5v12h-5l-1 1" /><path d="M2 4h4M2 7h4M2 10h4M9 4h3M9 7h3M9 10h3" /></Svg></ViewBtn>
          <ViewBtn><Svg w={15} h={14} stroke="#666"><path d="M0 .5h15M2 .5v2h11v-2M3 3v5h9V3M7.500 8v5M4 13.500h7" /></Svg></ViewBtn>
          <StatusText $ml={5} />
          <Svg w={9} h={2}><rect width="9" height="2" fill="#666" /></Svg>
          <Zoom><ZoomThumb /></Zoom>
          <Svg w={10} h={10} stroke="#666" strokeWidth="2"><path d="M0 5h10M5 0v10" /></Svg>
          <StatusText $ml={18}>70%</StatusText>
          <StatusText $ml={14}><Svg w={14} h={16} stroke="#666"><rect x=".5" y=".5" width="13" height="15" /><path d="M7 3v3M7 10v3M3 8h3M8 8h3" /></Svg></StatusText>
          <StatusText $ml={8} />
        </StatusRight>
      </Status>

      <Taskbar>
        <Start><WinLogo /></Start>
        <Search><SearchIcon />Type here to search</Search>
        <Slot $w={63} $pr={4}><TaskView /></Slot>
        <Slot $open><Explorer /></Slot>
        <Slot><Media /></Slot>
        <Slot><Edge /></Slot>
        <Slot $open><Chrome /></Slot>
        <Slot $open><ZoomApp /></Slot>
        <Slot $open><Palette /></Slot>
        <Slot $open><WordApp /></Slot>
        <Slot $open $active><PptApp /></Slot>
        <Tray>
          <TrayItem><Svg w={17} h={9} stroke="#fff" strokeWidth="1.300"><path d="M1 8.500l7.500-7 7.500 7" /></Svg></TrayItem>
          <TrayItem><Svg w={14} h={22} stroke="#fff"><rect x="2" y="0" width="10" height="15" rx="5" fill="#fff" /><path d="M.5 11c0 4 3 6 6.500 6s6.500-2 6.500-6M7 17v4M3 21.500h8" /></Svg></TrayItem>
          <TrayItem><Svg w={20} h={14} stroke="#fff"><path d="M7.500 3.500h11v9h-11z" /><rect x="9" y="5" width="8" height="6" fill="#fff" /><path d="M1 3v-3M4 3v-3M.5 3h4v3l-2 2v3h5" /></Svg></TrayItem>
          <TrayItem $w={36}><Svg w={18} h={18} stroke="#777"><path d="M1 17A16 16 0 0 1 17 1M5 17A12 12 0 0 1 17 5" /><path d="M8.500 17a8 8 0 0 1 7-7.500M12 17a4 4 0 0 1 3-4" stroke="#fff" /><circle cx="15" cy="16" r="1.500" fill="#fff" stroke="none" /></Svg></TrayItem>
          <TrayItem $w={24}><Svg w={20} h={18} stroke="#fff"><path d="M.5 6.500h3l5-5v15l-5-5h-3z" /><path d="M11 6c1 1.500 1 4 0 5.500M14 4c2 3 2 7 0 10" /><path d="M17 1c3 5 3 11 0 16" stroke="#888" /></Svg></TrayItem>
          <Clock>8:06<br />23/09/2020</Clock>
          <NotifyWrap>
            <Svg w={30} h={34}><path d="M0 2h20v20h-7l-4 5v-5H0z" fill="#fff" /><path d="M3 7h13M3 11h13M3 15h10" stroke="#222" /><circle cx="19" cy="23" r="9" fill="#333" stroke="#aaa" /><text x="16" y="28" fontSize="14" fill="#fff" fontFamily={FONT}>1</text></Svg>
          </NotifyWrap>
        </Tray>
      </Taskbar>
    </Page>
  );
}
